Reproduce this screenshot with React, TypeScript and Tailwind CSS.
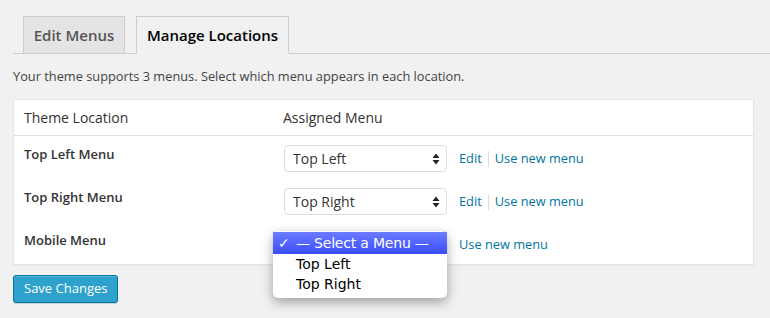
import React from 'react';

const rows = [
  { label: 'Top Left Menu', value: 'Top Left' },
  { label: 'Top Right Menu', value: 'Top Right' },
  { label: 'Mobile Menu', value: '', open: true },
];

const Arrows: React.FC = () => (
  <svg width="8" height="12" viewBox="0 0 8 12" className="absolute right-[6px] top-[7px]">
    <path d="M4 0.5 L7.5 5 L0.5 5 Z" fill="#222" />
    <path d="M4 11.5 L7.5 7 L0.5 7 Z" fill="#222" />
  </svg>
);

const SelectBox: React.FC<{ value: string; open?: boolean }> = ({ value, open }) => (
  <div className="relative w-[163px]">
    <div
      className={`relative h-[27px] rounded-[4px] border bg-white pl-[8px] text-[14px] leading-[25px] text-[#333] ${
        open ? 'border-[#5b9dd9]' : 'border-[#ddd]'
      }`}
    >
      {value}
      <Arrows />
    </div>
    {open && (
      <div className="absolute left-[-11px] top-0 z-10 w-[174px] rounded-[5px] bg-white pt-[1px] pb-[4px] shadow-[0_4px_12px_rgba(0,0,0,0.35)] font-['DejaVu_Sans',sans-serif] text-[14px] text-black">
        <div className="flex h-[22px] items-center bg-gradient-to-b from-[#6d7bff] to-[#3a4bfb] text-white">
          <span className="w-[23px] pl-[5px]">✓</span>
          <span className="tracking-[-0.2px]">— Select a Menu —</span>
        </div>
        <div className="flex h-5 items-center pl-[23px]">Top Left</div>
        <div className="flex h-5 items-center pl-[23px]">Top Right</div>
      </div>
    )}
  </div>
);

const App: React.FC = () => {
  return (
    <div className="h-[318px] w-[770px] overflow-hidden bg-[#f1f1f1] font-['Open_Sans',sans-serif] text-[#444]">
      {/* Tabs */}
      <div className="ml-[13px] flex items-end gap-[11px] border-b border-[#ccc] pl-[10px] pt-[16px]">
        <div className="-mb-px flex h-[38px] w-[102px] items-center justify-center border border-[#ccc] bg-[#e4e4e4] text-[15px] font-semibold text-[#555]">
          Edit Menus
        </div>
        <div className="-mb-px flex h-[38px] w-[153px] items-center justify-center border border-[#ccc] border-b-[#f1f1f1] bg-[#f1f1f1] text-[15px] font-semibold text-black">
          Manage Locations
        </div>
      </div>

      <p className="ml-[13px] mt-[13px] text-[12.8px] leading-[18px] text-[#444]">
        Your theme supports 3 menus. Select which menu appears in each location.
      </p>

      {/* Locations table */}
      <div className="ml-[13px] mt-[14px] w-[741px] border border-[#e5e5e5] bg-white shadow-[0_1px_1px_rgba(0,0,0,0.04)]">
        <div className="flex h-[36px] items-center border-b border-[#e1e1e1] text-[14px] text-[#333]">
          <div className="w-[259px] pl-[10px]">Theme Location</div>
          <div className="pl-[10px]">Assigned Menu</div>
        </div>
        <div className="flex flex-col gap-[16px] pt-[9px] pb-[6px]">
          {rows.map((row) => (
            <div key={row.label} className="flex items-start">
              <div className="w-[259px] pl-[10px] text-[13px] font-semibold leading-[19px] text-[#333]">
                {row.label}
              </div>
              <div className="flex items-center pl-[11px]">
                <SelectBox value={row.value} open={row.open} />
                <div className="ml-[12px] flex items-center text-[12.8px] text-[#0074a2]">
                  {!row.open && (
                    <>
                      <span>Edit</span>
                      <span className="mx-[6px] h-[16px] w-px bg-[#ddd]" />
                    </>
                  )}
                  <span>Use new menu</span>
                </div>
              </div>
            </div>
          ))}
        </div>
      </div>

      <button className="ml-[13px] mt-[10px] h-[28px] rounded-[3px] border border-[#0074a2] bg-[#2ea2cc] px-[10px] text-[13px] text-white shadow-[inset_0_1px_0_rgba(120,200,230,0.5),0_1px_0_rgba(0,0,0,0.15)]">
        Save Changes
      </button>
    </div>
  );
};

export default App;
